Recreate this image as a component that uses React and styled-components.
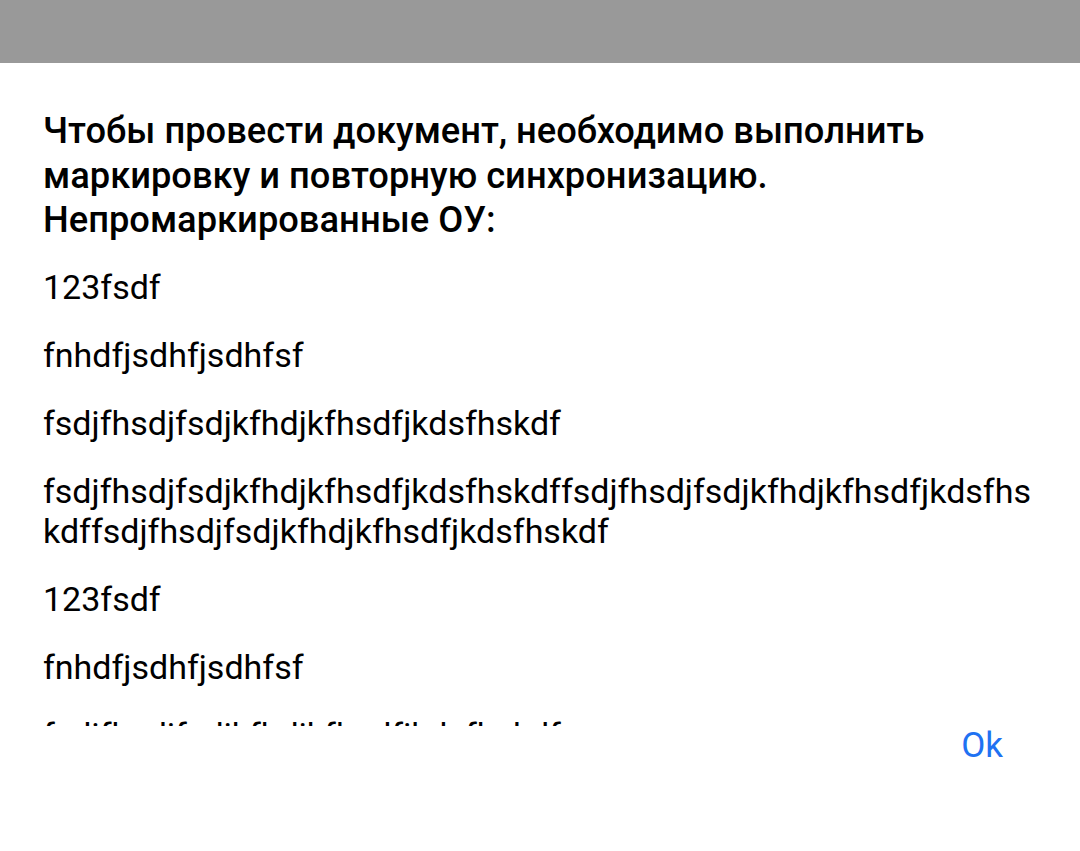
import React from "react";
import styled, { createGlobalStyle } from "styled-components";

const GlobalStyle = createGlobalStyle`
  html, body {
    margin: 0;
    padding: 0;
    background: #fff;
    font-family: Roboto, "Noto Sans", sans-serif;
    color: #000;
  }
`;

const Screen = styled.div`
  width: 1080px;
  height: 851px;
  display: flex;
  flex-direction: column;
  background: #fff;
  overflow: hidden;
`;

const StatusBar = styled.div`
  height: 63px;
  flex-shrink: 0;
  background: #999999;
`;

const Message = styled.div`
  height: 663px;
  flex-shrink: 0;
  overflow: hidden;
  box-sizing: border-box;
  padding: 46px 43px 0 43px;
`;

const Title = styled.div`
  font-family: "Roboto Medium", Roboto, "Noto Sans", sans-serif;
  font-size: 36.2px;
  font-weight: 500;
  line-height: 44.5px;
  margin-bottom: 24px;
`;

const List = styled.div`
  display: flex;
  flex-direction: column;
  gap: 28px;
`;

const Item = styled.div`
  font-size: 34px;
  line-height: 40px;
  overflow-wrap: anywhere;
  word-break: break-all;
`;

const Actions = styled.div`
  display: flex;
  justify-content: flex-end;
  padding-right: 77px;
`;

const TextButton = styled.button`
  background: none;
  border: none;
  padding: 0;
  font-family: Roboto, "Noto Sans", sans-serif;
  font-size: 35px;
  line-height: 40px;
  color: #1f72f2;
  cursor: pointer;
`;

const items = [
  "123fsdf",
  "fnhdfjsdhfjsdhfsf",
  "fsdjfhsdjfsdjkfhdjkfhsdfjkdsfhskdf",
  "fsdjfhsdjfsdjkfhdjkfhsdfjkdsfhskdffsdjfhsdjfsdjkfhdjkfhsdfjkdsfhskdffsdjfhsdjfsdjkfhdjkfhsdfjkdsfhskdf",
  "123fsdf",
  "fnhdfjsdhfjsdhfsf",
  "fsdjfhsdjfsdjkfhdjkfhsdfjkdsfhskdf",
];

export default function App() {
  return (
    <Screen>
      <GlobalStyle />
      <StatusBar />
      <Message>
        <Title>
          Чтобы провести документ, необходимо выполнить маркировку и повторную
          синхронизацию. Непромаркированные ОУ:
        </Title>
        <List>
          {items.map((t, i) => (
            <Item key={i}>{t}</Item>
          ))}
        </List>
      </Message>
      <Actions>
        <TextButton>Ok</TextButton>
      </Actions>
    </Screen>
  );
}
